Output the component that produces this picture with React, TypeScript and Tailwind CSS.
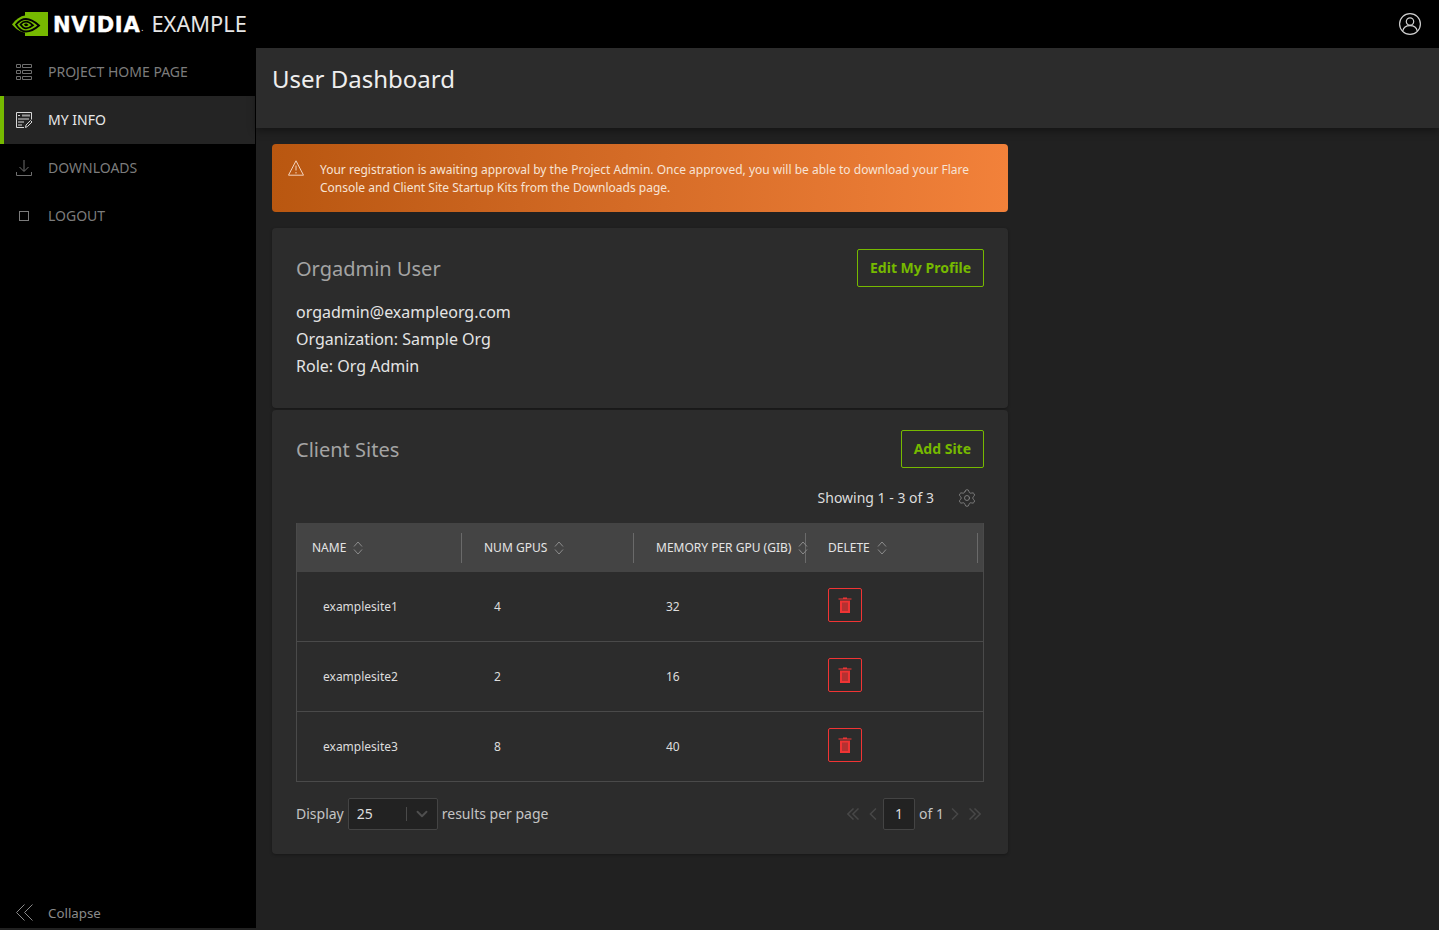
import { ChevronDown, Settings } from "lucide-react";

const sites = [
  { name: "examplesite1", gpus: 4, memory: 32 },
  { name: "examplesite2", gpus: 2, memory: 16 },
  { name: "examplesite3", gpus: 8, memory: 40 },
];

const NvidiaEye = () => (
  <svg width="36" height="24" viewBox="0 0 36 24" fill="none">
    <path d="M13 0h23v24H13z" fill="#76b900" />
    <path d="M0 12.500C4 7 8.500 4 13 3.500v17C8 20 4 17 0 12.500z" fill="#76b900" />
    <path d="M4 12.500C7 9 10.500 7 14 7c5 0 9 3 13 6.500-4 3.500-8 6-13 6-4 0-7.500-3-10-7z" stroke="#000" strokeWidth="1.800" />
    <path d="M8.500 12.500c1.500-1.800 3.500-2.800 5.500-2.800 3 0 5 1.800 7 3.600-1.800 1.500-4 3-7 3-2.500 0-4-1.700-5.500-3.800z" stroke="#000" strokeWidth="1.800" />
    <path d="M12 12.500c.6-.7 1.300-1 2-1 1 0 1.800.7 2.500 1.500-.7.700-1.500 1.200-2.500 1.200-.8 0-1.400-.8-2-1.700z" fill="#000" />
  </svg>
);

const ListIcon = () => (
  <svg width="16" height="16" viewBox="0 0 16 16" fill="none" stroke="#6f6f6f">
    <path d="M.5.500h4v3h-4zM6.500.500h9v3h-9zM.5 6.500h4v3h-4zM6.500 6.500h9v3h-9zM.5 12.500h4v3h-4zM6.500 12.500h9v3h-9z" />
  </svg>
);

const InfoIcon = () => (
  <svg width="16" height="16" viewBox="0 0 16 16" fill="none" stroke="#d8d8d8">
    <path d="M8 15.500H.5V.5h15v7" />
    <path d="M6 3.500h8" strokeWidth="2" stroke="#9a9a9a" />
    <path d="M2 3.500h2M2 7h11M2 10h6M2 13h4" />
    <path d="M9.500 15.500l.5-2.500 4.500-4.500 1.500 1.500-4.500 4.500z" fill="#242424" />
  </svg>
);

const DownloadIcon = () => (
  <svg width="16" height="16" viewBox="0 0 16 16" fill="none" stroke="#6f6f6f">
    <path d="M8 0v11M3.500 7L8 11.500 12.500 7M.5 12v3.500h15V12" />
  </svg>
);

const UserIcon = () => (
  <svg width="22" height="22" viewBox="0 0 22 22" fill="none" stroke="#d0d0d0" strokeWidth="1.200">
    <circle cx="11" cy="11" r="10.400" />
    <circle cx="11" cy="8.500" r="3.700" />
    <path d="M3.800 18c.6-3.300 3.500-5.300 7.200-5.300s6.600 2 7.200 5.300" />
  </svg>
);

const WarningIcon = () => (
  <svg width="16" height="16" viewBox="0 0 16 16" fill="none" stroke="#f3d3bd" className="shrink-0">
    <path d="M8 .8l7.500 14.400H.5z" />
    <path d="M8 5.500v5M8 12v1.500" />
  </svg>
);

const CollapseIcon = () => (
  <svg width="17" height="17" viewBox="0 0 17 17" fill="none" stroke="#8a8a8a">
    <path d="M8.500.5l-8 8 8 8M16.500.5l-8 8 8 8" />
  </svg>
);

const SortIcon = () => (
  <svg width="10" height="16" viewBox="0 0 10 16" fill="none" stroke="#8c8c8c" className="shrink-0">
    <path d="M1 6.500L5 2l4 4.500M1 9.500L5 14l4-4.500" />
  </svg>
);

const TrashIcon = () => (
  <svg width="14" height="16" viewBox="0 0 14 16">
    <path d="M5 1.500V.5h4v1h4.500v1H.5v-1z" fill="#f03434" />
    <path fillRule="evenodd" d="M2 3.500h10V16H2zM4.700 5.500v8.500h.6V5.500zM6.700 5.500v8.500h.6V5.500zM8.700 5.500v8.500h.6V5.500z" fill="#f03434" />
  </svg>
);

const PageChevron = ({ d, width }: { d: string; width: number }) => (
  <svg width={width} height="12" viewBox={`0 0 ${width} 12`} fill="none" stroke="#474747" strokeWidth="1.500">
    <path d={d} />
  </svg>
);

const NavItem = ({ icon, label, active }: { icon: React.ReactNode; label: string; active?: boolean }) => (
  <div
    className={`flex h-12 w-[255px] items-center border-l-4 pl-3 text-sm ${
      active ? "border-[#76b900] bg-[#242424] text-[#e8e8e8]" : "border-transparent text-[#7c7c7c]"
    }`}
  >
    <span className="flex w-4 justify-center">{icon}</span>
    <span className="ml-4">{label}</span>
  </div>
);

const HeaderCell = ({ label, className }: { label: string; className: string }) => (
  <div className={`flex h-[30px] items-center gap-[7px] whitespace-nowrap border-r border-[#6a6a6a] text-xs text-[#e4e4e4] ${className}`}>
    <span>{label}</span>
    <SortIcon />
  </div>
);

const App = () => {
  return (
    <div className="flex h-[930px] w-[1439px] flex-col overflow-hidden bg-[#212121] font-['Noto_Sans',sans-serif]">
      <header className="flex h-12 shrink-0 items-center justify-between bg-black pl-3 pr-[18px]">
        <div className="flex items-center">
          <NvidiaEye />
          <span className="ml-[5px] mt-1 font-['DejaVu_Sans',sans-serif] text-[21px] font-bold tracking-[0.7px] text-white [-webkit-text-stroke:0.4px_white]">
            NVIDIA
          </span>
          <span className="ml-[1px] mt-2 text-[8px] text-white">.</span>
          <span className="ml-[8px] text-[21.800px] text-[#e6e6e6]">EXAMPLE</span>
        </div>
        <UserIcon />
      </header>

      <div className="flex min-h-0 flex-1">
        <aside className="flex h-[880px] w-[256px] shrink-0 flex-col justify-between bg-black">
          <nav>
            <NavItem icon={<ListIcon />} label="PROJECT HOME PAGE" />
            <NavItem icon={<InfoIcon />} label="MY INFO" active />
            <NavItem icon={<DownloadIcon />} label="DOWNLOADS" />
            <NavItem icon={<span className="block h-[10px] w-[10px] border border-[#7c7c7c]" />} label="LOGOUT" />
          </nav>
          <div className="flex h-[30px] items-center pl-4 pb-[2px] text-[13.300px] text-[#8a8a8a]">
            <CollapseIcon />
            <span className="ml-[15px] mt-[3px]">Collapse</span>
          </div>
        </aside>

        <main className="min-w-0 flex-1">
          <div className="flex h-20 items-start bg-[#2c2c2c] pl-4 pt-[15px] shadow-[0_3px_8px_rgba(0,0,0,0.4)]">
            <h1 className="text-2xl text-[#eeeeee]">User Dashboard</h1>
          </div>

          <div className="w-[768px] px-4 pt-4">
            <div className="flex h-[68px] items-start rounded bg-gradient-to-r from-[#b95710] to-[#f2813a] pl-4 pr-8 pt-4">
              <WarningIcon />
              <p className="ml-4 mt-[1px] text-xs leading-[18px] text-[#f7e3d5]">
                Your registration is awaiting approval by the Project Admin. Once approved, you will be able to download your Flare Console and Client Site Startup Kits from the Downloads page.
              </p>
            </div>

            <section className="mt-4 h-[180px] rounded bg-[#2c2c2c] px-6 pt-[21px] shadow-[0_1px_3px_rgba(0,0,0,0.3)]">
              <div className="flex items-center justify-between">
                <h2 className="mt-[2px] text-xl text-[#a4a4a4]">Orgadmin User</h2>
                <button className="flex h-[38px] items-center rounded-[2px] border border-[#76b900] px-3 text-sm font-bold text-[#76b900]">
                  Edit My Profile
                </button>
              </div>
              <div className="mt-3 text-base leading-[27px] text-[#e4e4e4]">
                <p>orgadmin@exampleorg.com</p>
                <p>Organization: Sample Org</p>
                <p>Role: Org Admin</p>
              </div>
            </section>

            <section className="mt-[2px] h-[444px] rounded bg-[#2c2c2c] px-6 pt-5 shadow-[0_1px_3px_rgba(0,0,0,0.3)]">
              <div className="flex items-center justify-between">
                <h2 className="mt-[2px] text-xl text-[#a4a4a4]">Client Sites</h2>
                <button className="flex h-[38px] items-center rounded-[2px] border border-[#76b900] px-3 text-sm font-bold text-[#76b900]">
                  Add Site
                </button>
              </div>

              <div className="mt-5 flex h-5 items-center justify-end pr-[7px] text-sm text-[#dddddd]">
                <span>Showing 1 - 3 of 3</span>
                <Settings size={20} strokeWidth={1} className="ml-[23px] text-[#8a8a8a]" />
              </div>

              <div className="mt-[15px] border-x border-[#4a4a4a]">
                <div className="flex h-[49px] items-center bg-[#444444] text-[#e4e4e4]">
                  <HeaderCell label="NAME" className="w-[165px] pl-[15px]" />
                  <HeaderCell label="NUM GPUS" className="w-[172px] pl-[22px]" />
                  <HeaderCell label="MEMORY PER GPU (GIB)" className="w-[172px] pl-[22px]" />
                  <HeaderCell label="DELETE" className="w-[172px] pl-[22px]" />
                </div>
                {sites.map((site) => (
                  <div key={site.name} className="flex h-[70px] border-b border-[#4a4a4a] text-xs text-[#dddddd]">
                    <div className="flex w-[165px] items-center pl-[26px]">{site.name}</div>
                    <div className="flex w-[172px] items-center pl-[32px]">{site.gpus}</div>
                    <div className="flex w-[172px] items-center pl-[32px]">{site.memory}</div>
                    <div className="flex w-[172px] items-center pb-[3px] pl-[22px]">
                      <button className="flex h-[34px] w-[34px] items-center justify-center rounded-[2px] border border-[#f03434]">
                        <TrashIcon />
                      </button>
                    </div>
                  </div>
                ))}
              </div>

              <div className="mt-4 flex h-8 items-center justify-between text-sm text-[#c4c4c4]">
                <div className="flex items-center">
                  <span>Display</span>
                  <div className="ml-1 flex h-8 w-[90px] items-center rounded-[2px] border border-[#444444] bg-[#222222] pl-2 text-[#dddddd]">
                    <span className="w-[49px]">25</span>
                    <span className="h-[14px] w-px bg-[#4a4a4a]" />
                    <ChevronDown size={18} strokeWidth={2.500} className="ml-[6px] text-[#4f4f4f]" />
                  </div>
                  <span className="ml-1">results per page</span>
                </div>
                <div className="flex items-center pr-[3px]">
                  <PageChevron width={12} d="M6.500.5L.9 6l5.600 5.500M11.500.5L5.900 6l5.600 5.500" />
                  <span className="ml-[10px]"><PageChevron width={8} d="M7 .5L1.400 6 7 11.500" /></span>
                  <div className="ml-[6px] flex h-8 w-8 items-center justify-center rounded-[2px] border border-[#444444] bg-[#222222] text-[#dddddd]">1</div>
                  <span className="ml-1 text-[#c4c4c4]">of 1</span>
                  <span className="ml-[7px]"><PageChevron width={8} d="M1 .5L6.600 6 1 11.500" /></span>
                  <span className="ml-[10px]"><PageChevron width={12} d="M.5.5L6.100 6 .5 11.500M5.500.5L11.100 6 5.500 11.500" /></span>
                </div>
              </div>
            </section>
          </div>
        </main>
      </div>
    </div>
  );
};

export default App;
